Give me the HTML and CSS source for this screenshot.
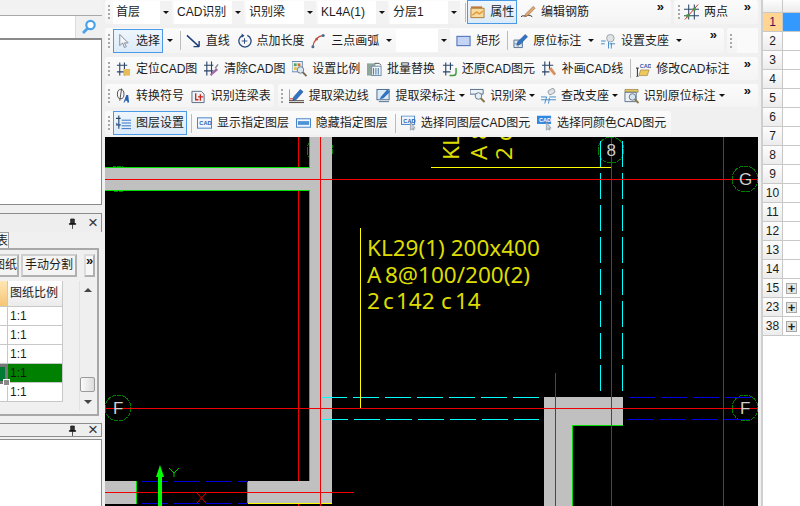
FILE: index.html
```html
<!DOCTYPE html>
<html lang="zh">
<head>
<meta charset="utf-8">
<title>CAD识别</title>
<link rel="stylesheet" href="styles.css">
</head>
<body>
<svg class="defs" aria-hidden="true">
  <symbol id="i-sel" viewBox="0 0 16 16"><path d="M4 1v12l3-3 2 5 2-1-2-4h4z" fill="#f4f6fa" stroke="#7d8794"/></symbol>
  <symbol id="i-line" viewBox="0 0 16 16"><path d="M1 2l13 12M14 14V8M14 14H8" fill="none" stroke="#1c3f78" stroke-width="1.5"/></symbol>
  <symbol id="i-addlen" viewBox="0 0 16 16"><path d="M6 2a6.5 6.5 0 1 0 5 0" fill="none" stroke="#274a7c" stroke-width="1.4"/><path d="M5 0l3 2.500-3 2z" fill="#274a7c"/><path d="M8 5v6M5 8h6" stroke="#274a7c"/></symbol>
  <symbol id="i-arc" viewBox="0 0 16 16"><path d="M2 14C3 8 7 3 13 2" fill="none" stroke="#c04a3a" stroke-width="1.3"/><circle cx="2" cy="14" r="1.600" fill="#4c6c8c"/><circle cx="6" cy="6" r="1.400" fill="#c05040"/><circle cx="13" cy="2" r="1.600" fill="#4c6c8c"/></symbol>
  <symbol id="i-rect" viewBox="0 0 16 16"><rect x="1" y="3" width="14" height="10" fill="#c4d4f4" stroke="#3d62b4"/></symbol>
  <symbol id="i-orig" viewBox="0 0 16 16"><path d="M1 7h9v8H1z" fill="#dfe7f2" stroke="#53708f"/><path d="M1 11h9M5.500 7v8" stroke="#7f98b4"/><path d="M5 9l8-8 2.500 2.500-8 8-3.500 1z" fill="#2f73c4" stroke="#234f86" stroke-width=".6"/></symbol>
  <symbol id="i-sup" viewBox="0 0 16 16"><circle cx="10" cy="5" r="4" fill="#dfe3e6" stroke="#98a2aa"/><path d="M0 8h5M0 11h4M9 11h6M8 9v7M11 10v6" stroke="#3f87c8" fill="none"/></symbol>
  <symbol id="i-loc" viewBox="0 0 16 16"><path d="M1 4h11M1 11h11M4 1v14M9 1v14" stroke="#2c4668" stroke-width="1.200"/><path d="M8 8h7v7H8z" fill="#e3bd5b"/></symbol>
  <symbol id="i-clr" viewBox="0 0 16 16"><path d="M0 4h10M0 10h10M3 0v15M8 0v15" stroke="#2c4668" stroke-width="1.200"/><path d="M6 14l7-7 2 2-7 6z" fill="#a06aa8"/><path d="M12 7l3-4" stroke="#80828c" stroke-width="1.500"/></symbol>
  <symbol id="i-scale" viewBox="0 0 16 16"><rect x="0" y="0" width="11" height="11" fill="#eef3f8" stroke="#5f87ae"/><rect x="2" y="2" width="3" height="3" fill="#55a25a"/><rect x="6" y="2" width="3" height="3" fill="#d86a3a"/><rect x="2" y="6" width="3" height="3" fill="#e7c24a"/><circle cx="9" cy="9" r="3.500" fill="#dbe7f1" stroke="#64788c"/><path d="M11.500 11.500l4 4" stroke="#7b6a55" stroke-width="2"/></symbol>
  <symbol id="i-batch" viewBox="0 0 16 16"><rect x="0" y="2" width="9" height="13" fill="#8fa79a"/><rect x="5" y="5" width="10" height="10" fill="#f2f5f8" stroke="#6a8aa8"/><path d="M7 7v7M9.500 7v7M12 7v7" stroke="#3c6ea0"/><path d="M8 2h5l2 2" fill="none" stroke="#555"/></symbol>
  <symbol id="i-res" viewBox="0 0 16 16"><path d="M1 4h11M1 11h8M4 1v14M9 1v8" stroke="#2c4668" stroke-width="1.200"/><path d="M15 7v5a3 3 0 0 1-3 3H8" fill="none" stroke="#3a9a3a" stroke-width="1.500"/></symbol>
  <symbol id="i-draw" viewBox="0 0 16 16"><path d="M0 4h12M0 11h8M3 0v15M8 0v9" stroke="#2c4668" stroke-width="1.200"/><path d="M7 8l3-2 5 7-2 2z" fill="#d88e60"/></symbol>
  <symbol id="i-mod" viewBox="0 0 16 16"><path d="M3 15l2-6h9l-2 6z" fill="#efc85c" stroke="#8a7030" stroke-width=".6"/><path d="M0 7h3M1.500 7v9M0 16h3" stroke="#222"/></symbol>
  <symbol id="i-conv" viewBox="0 0 16 16"><ellipse cx="5" cy="6" rx="3.500" ry="5" fill="none" stroke="#4a4a4a"/><path d="M6 0L4 13" stroke="#4a4a4a"/><path d="M8 15l3-8h2l1 8h-2v-2h-2l-1 2z" fill="#2660b0"/></symbol>
  <symbol id="i-tab" viewBox="0 0 16 16"><path d="M1 3h10l3 3v9H1z" fill="#eef2f6" stroke="#5a6a80"/><path d="M5 5v7h3M10 6v7M7.500 9H13" stroke="#c8281c" stroke-width="1.400" fill="none"/></symbol>
  <symbol id="i-edge" viewBox="0 0 16 16"><path d="M0 1v12h16M0 15h16" stroke="#4a3a30" fill="none"/><path d="M5 9l7-8 3 2.500-7 8-4 1.500z" fill="#2f73c4" stroke="#234f86" stroke-width=".6"/><path d="M1 11h4" stroke="#c8281c"/></symbol>
  <symbol id="i-lab" viewBox="0 0 16 16"><rect x="1" y="1" width="13" height="11" fill="#dceaf6" stroke="#4a6a8a"/><path d="M3 14h11" stroke="#4a6a8a"/><path d="M5 9l7-8 3 2.500-7 7-4 1z" fill="#2f73c4"/></symbol>
  <symbol id="i-rec" viewBox="0 0 16 16"><path d="M0 1h14v5H0z" fill="#eef2f6" stroke="#4c6888"/><circle cx="9" cy="8" r="3.500" fill="#e4eef6" stroke="#64788c"/><path d="M11.500 10.500l4 4" stroke="#8a7a45" stroke-width="2.200"/></symbol>
  <symbol id="i-chk" viewBox="0 0 16 16"><rect x="8" y="1" width="7" height="5" rx="2" transform="rotate(-30 11 4)" fill="#dfe3e6" stroke="#98a2aa"/><path d="M0 9h6M9 9h7M0 12h16M6 9l-2 7M9 10l-1 6" stroke="#3f87c8" fill="none"/></symbol>
  <symbol id="i-olab" viewBox="0 0 16 16"><path d="M1 1h14v3H1z" fill="#e8c65c" stroke="#7a6a30" stroke-width=".6"/><path d="M1 4h12v10H1z" fill="#eef2f4" stroke="#5a7088"/><circle cx="9" cy="9" r="3.500" fill="#d8e6f0" stroke="#64788c"/><path d="M11.500 11.500l4 4" stroke="#8a7a45" stroke-width="2"/></symbol>
  <symbol id="i-lay" viewBox="0 0 16 16"><path d="M3 0v14M0 3h5M0 10h5" stroke="#2c4668" stroke-width="1.200"/><path d="M6 5h10M6 8h10M6 11h10M6 14h10" stroke="#2d6fc0"/><path d="M0 8l4 3" stroke="#2d6fc0"/></symbol>
  <symbol id="i-show" viewBox="0 0 16 16"><rect x=".5" y="2.500" width="15" height="11" fill="#eef5fc" stroke="#3f7fc8"/></symbol>
  <symbol id="i-hide" viewBox="0 0 16 16"><rect x=".5" y="3.500" width="15" height="9" fill="#f2f7fc" stroke="#3f7fc8"/><rect x="2" y="6" width="12" height="4" fill="#4f92d8"/></symbol>
  <symbol id="i-same" viewBox="0 0 16 16"><rect x=".5" y=".5" width="14" height="9" fill="#eef5fc" stroke="#3f7fc8"/><path d="M10 7v9l2-2 1 2 1-.5-1-2h2z" fill="#c8d0d8" stroke="#7a8794" stroke-width=".6"/></symbol>
  <symbol id="i-clrs" viewBox="0 0 16 16"><rect x="0" y="0" width="15" height="9" fill="#3088e0"/><path d="M10 7v9l2-2 1 2 1-.5-1-2h2z" fill="#c8d0d8" stroke="#7a8794" stroke-width=".6"/></symbol>
  <symbol id="i-prop" viewBox="0 0 16 16"><path d="M1 2h12v2H1z" fill="#c07a3a"/><path d="M1 4h14v10H1z" fill="#f6dca0" stroke="#b07830"/><path d="M2 11l5-4 3 2 4-3v2l-4 3-3-2-4 3z" fill="#e89a38"/></symbol>
  <symbol id="i-edit" viewBox="0 0 16 16"><path d="M0 13c2-2 4 0 6-1s3-1 6 1" fill="none" stroke="#222"/><path d="M5 10l8-8 2 2-8 8-3 1z" fill="#e0a870" stroke="#8a5a30" stroke-width=".6"/></symbol>
  <symbol id="i-two" viewBox="0 0 16 16"><path d="M0 5h16M0 12h16M5 0v16M11 0v16" stroke="#2c4668" stroke-width="1.100"/><path d="M1 16L15 0" stroke="#c8281c"/><circle cx="4" cy="12" r="1.800" fill="#4a9a3a"/><circle cx="11" cy="5" r="1.800" fill="#4a9a3a"/></symbol>
  <symbol id="i-find" viewBox="0 0 16 16"><circle cx="9.500" cy="6" r="4.200" fill="#fff" stroke="#4aa3ea" stroke-width="2.200"/><path d="M6.500 9.500L2 14" stroke="#4aa3ea" stroke-width="2.800"/></symbol>
  <symbol id="i-pin" viewBox="0 0 10 12"><path d="M3 1h4v5H3zM1.500 6h7v1h-7zM5 7v5" fill="#333" stroke="#111" stroke-width=".8"/></symbol>
</svg>

<div class="app">
  <aside class="left">
    <div class="left-top"></div>
    <div class="search">
      <div class="search-input"></div>
      <svg class="ico-search"><use href="#i-find"/></svg>
    </div>
    <div class="left-body"></div>

    <div class="title"><svg class="pin"><use href="#i-pin"/></svg><span class="close">×</span></div>
    <div class="tabs"><span class="tab">表</span></div>
    <div class="pane">
      <div class="pane-tools">
        <span class="pbtn clip">图纸</span>
        <span class="pbtn">手动分割</span>
        <span class="more pmore">»</span>
      </div>
      <div class="pane-main">
        <div class="table">
          <div class="c head-sel"></div><div class="c head">图纸比例</div>
          <div class="c stub"></div><div class="c">1:1</div>
          <div class="c stub"></div><div class="c">1:1</div>
          <div class="c stub"></div><div class="c">1:1</div>
          <div class="c cur"></div><div class="c green">1:1</div>
          <div class="c stub"></div><div class="c">1:1</div>
        </div>
        <div class="scroll">
          <span class="sa up"></span>
          <span class="thumb"></span>
          <span class="sa down"></span>
        </div>
      </div>
    </div>

    <div class="title second"><svg class="pin"><use href="#i-pin"/></svg><span class="close">×</span></div>
    <div class="left-bottom"></div>
  </aside>

  <main class="main">
    <div class="bars">
      <div class="row r1">
        <div class="tb grow">
          <i class="grip"></i>
          <div class="combo w59"><span>首层</span><b class="cb"><i class="caret"></i></b></div>
          <div class="combo w70"><span>CAD识别</span><b class="cb"><i class="caret"></i></b></div>
          <div class="combo w70"><span>识别梁</span><b class="cb"><i class="caret"></i></b></div>
          <div class="combo w70"><span>KL4A(1)</span><b class="cb"><i class="caret"></i></b></div>
          <div class="combo w70"><span>分层1</span><b class="cb"><i class="caret"></i></b></div>
          <i class="sep"></i>
          <span class="tool on"><svg class="ico"><use href="#i-prop"/></svg>属性</span>
          <span class="tool"><svg class="ico"><use href="#i-edit"/></svg>编辑钢筋</span>
          <span class="more">»</span>
        </div>
        <div class="tb fix86">
          <i class="grip"></i>
          <span class="tool"><svg class="ico"><use href="#i-two"/></svg>两点</span>
          <span class="more">»</span>
        </div>
      </div>

      <div class="row r2">
        <div class="tb grow">
          <i class="grip"></i>
          <span class="tool on"><svg class="ico"><use href="#i-sel"/></svg>选择</span>
          <i class="caret split"></i>
          <i class="sep"></i>
          <span class="tool"><svg class="ico"><use href="#i-line"/></svg>直线</span>
          <span class="tool"><svg class="ico"><use href="#i-addlen"/></svg>点加长度</span>
          <span class="tool"><svg class="ico"><use href="#i-arc"/></svg>三点画弧<i class="caret far"></i></span>
          <div class="combo blank"><b class="cb"><i class="caret"></i></b></div>
          <span class="tool"><svg class="ico"><use href="#i-rect"/></svg>矩形</span>
          <i class="sep"></i>
          <span class="tool"><svg class="ico"><use href="#i-orig"/></svg>原位标注<i class="caret far"></i></span>
          <span class="tool"><svg class="ico"><use href="#i-sup"/></svg>设置支座<i class="caret far"></i></span>
          <span class="more">»</span>
        </div>
        <div class="tb fix31"><i class="grip"></i><div class="blank-bar"></div></div>
      </div>

      <div class="row r3">
        <div class="tb grow">
          <i class="grip"></i>
          <span class="tool"><svg class="ico"><use href="#i-loc"/></svg>定位CAD图</span>
          <span class="tool"><svg class="ico"><use href="#i-clr"/></svg>清除CAD图</span>
          <span class="tool"><svg class="ico"><use href="#i-scale"/></svg>设置比例</span>
          <span class="tool"><svg class="ico"><use href="#i-batch"/></svg>批量替换</span>
          <span class="tool"><svg class="ico"><use href="#i-res"/></svg>还原CAD图元</span>
          <span class="tool"><svg class="ico"><use href="#i-draw"/></svg>补画CAD线</span>
          <i class="sep"></i>
          <span class="tool"><svg class="ico" viewBox="0 0 16 16"><use href="#i-mod"/><text x="4" y="6.500" class="ico-text blue">CAD</text></svg>修改CAD标注</span>
          <span class="more">»</span>
        </div>
      </div>

      <div class="row r4">
        <div class="tb tight">
          <i class="grip"></i>
          <span class="tool"><svg class="ico"><use href="#i-conv"/></svg>转换符号</span>
          <span class="tool"><svg class="ico"><use href="#i-tab"/></svg>识别连梁表</span>
        </div>
        <div class="tb grow">
          <i class="grip"></i>
          <span class="tool"><svg class="ico"><use href="#i-edge"/></svg>提取梁边线</span>
          <span class="tool"><svg class="ico"><use href="#i-lab"/></svg>提取梁标注<i class="caret near"></i></span>
          <span class="tool"><svg class="ico"><use href="#i-rec"/></svg>识别梁<i class="caret near"></i></span>
          <span class="tool"><svg class="ico"><use href="#i-chk"/></svg>查改支座<i class="caret near"></i></span>
          <span class="tool"><svg class="ico"><use href="#i-olab"/></svg>识别原位标注<i class="caret near"></i></span>
          <span class="more">»</span>
        </div>
      </div>

      <div class="row r5">
        <div class="tb">
          <i class="grip"></i>
          <span class="tool on"><svg class="ico"><use href="#i-lay"/></svg>图层设置</span>
          <i class="sep"></i>
          <span class="tool"><svg class="ico" viewBox="0 0 16 16"><use href="#i-show"/><text x="2.500" y="10.500" class="ico-text blue">CAD</text></svg>显示指定图层</span>
          <span class="tool"><svg class="ico"><use href="#i-hide"/></svg>隐藏指定图层</span>
          <i class="sep"></i>
          <span class="tool"><svg class="ico" viewBox="0 0 16 16"><use href="#i-same"/><text x="2.500" y="7.500" class="ico-text blue">CAD</text></svg>选择同图层CAD图元</span>
          <span class="tool"><svg class="ico" viewBox="0 0 16 16"><use href="#i-clrs"/><text x="2" y="7" class="ico-text white">CAD</text></svg>选择同颜色CAD图元</span>
        </div>
      </div>
    </div>

    <svg class="canvas" viewBox="105 137 653 369" shape-rendering="crispEdges">
      <g class="axis-circle">
        <circle cx="118" cy="179" r="13"/>
        <circle cx="320" cy="150" r="13"/>
        <circle cx="611" cy="150" r="13"/>
        <circle cx="745" cy="179" r="13"/>
        <circle cx="118" cy="408" r="13"/>
        <circle cx="745" cy="408" r="13"/>
      </g>

      <g class="red">
        <path d="M298.500 137V506"/>
      </g>

      <g class="wall">
        <rect x="105" y="167" width="205" height="24"/>
        <rect x="310" y="137" width="22" height="367"/>
        <rect x="248" y="481" width="84" height="23"/>
        <rect x="105" y="481" width="31" height="23"/>
        <rect x="544" y="397" width="79" height="29"/>
        <rect x="544" y="397" width="28" height="109"/>
      </g>

      <g class="edge">
        <path d="M105 167.500H310M105 190.500H310M309.500 137V167M309.500 190V481M136.500 481V504M247.500 481V504M572.500 426V506M572 425.500H623"/>
      </g>
      <path class="yl" d="M248 503.500H332"/>

      <g class="dash-blue">
        <path d="M629 397.500H751M628 419.500H750M142 481.500H248M142 503.500H248"/>
      </g>
      <g class="dash-cyan">
        <path d="M321 397.500H539M322 419.500H539"/>
        <path d="M600.500 141V391M622.500 141V391"/>
      </g>
      <path class="cyan-solid" d="M320.500 398V413"/>

      <g class="red">
        <path d="M105 179.500H758"/>
        <path d="M320.500 137V506"/>
        <path d="M555.500 373V506"/>
        <path d="M611.500 137V506"/>
        <path d="M723.500 137V506"/>
        <path d="M105 408.500H758"/>
        <path d="M105 492.500H354"/>
      </g>

      <path class="yl" d="M431 167.500H611M360.500 228V408"/>

      <g class="axis-text">
        <text x="113" y="414">F</text>
        <text x="740" y="414">F</text>
        <text x="739" y="185">G</text>
        <text x="606.500" y="156">8</text>
      </g>

      <g class="note">
        <text x="367" y="256">KL29(1) 200x400</text>
        <text x="367" y="283">A</text>
        <text x="385" y="283">8@100/200(2)</text>
        <text x="367" y="309">2</text>
        <text x="383" y="309">c</text>
        <text x="396" y="309">142</text>
        <text x="441" y="309">c</text>
        <text x="455" y="309">14</text>
        <text transform="translate(459 160) rotate(-90)">KL</text>
        <text transform="translate(487 160) rotate(-90)">A 8</text>
        <text transform="translate(512 160) rotate(-90)">2 c</text>
      </g>

      <path class="arrow" d="M158 506V477H156L160 465L164 477H162V506Z" shape-rendering="auto"/>
      <path class="thin-green" d="M169 468L174 473L179 468M174 473V477"/>
      <path class="thin-red" d="M197 493L206 503M206 493L197 503"/>
    </svg>
  </main>

  <aside class="right">
    <div class="rail"></div>
    <div class="grid">
      <div class="rh top"></div><div class="rc top"></div>
      <div class="rh sel">1</div><div class="rc blue"></div>
      <div class="rh">2</div><div class="rc"></div>
      <div class="rh">3</div><div class="rc"></div>
      <div class="rh">4</div><div class="rc"></div>
      <div class="rh">5</div><div class="rc"></div>
      <div class="rh">6</div><div class="rc"></div>
      <div class="rh">7</div><div class="rc"></div>
      <div class="rh">8</div><div class="rc"></div>
      <div class="rh">9</div><div class="rc"></div>
      <div class="rh">10</div><div class="rc"></div>
      <div class="rh">11</div><div class="rc"></div>
      <div class="rh">12</div><div class="rc"></div>
      <div class="rh">13</div><div class="rc"></div>
      <div class="rh">14</div><div class="rc"></div>
      <div class="rh">15</div><div class="rc"><span class="plus">+</span></div>
      <div class="rh">23</div><div class="rc"><span class="plus">+</span></div>
      <div class="rh">38</div><div class="rc"><span class="plus">+</span></div>
    </div>
  </aside>
</div>
</body>
</html>
```
FILE: styles.css
```css
* { box-sizing: border-box; }
html, body { margin: 0; padding: 0; }
body {
  width: 800px;
  height: 506px;
  overflow: hidden;
  background: #f0f0f0;
  color: #1c1c1c;
  font: 12px/16px "Liberation Sans", "Noto Sans CJK SC", sans-serif;
}
.defs { position: absolute; width: 0; height: 0; }
.ico-text { font: bold 6px "Liberation Sans", sans-serif; }
.ico-text.blue { fill: #1f5fb0; }
.ico-text.white { fill: #fff; }

.app { display: flex; height: 506px; }

/* left docks */
.left { width: 102px; margin-right: 3px; display: flex; flex-direction: column; flex: none; }
.left-top { height: 16px; background: #f2f2f2; border-bottom: 1px solid #a8a8a8; }
.search { height: 24px; display: flex; align-items: center; background: #f0f0f0; border-bottom: 2px solid #8a8a8a; }
.search-input { width: 76px; height: 100%; background: #fff; border-right: 1px solid #dcdcdc; }
.ico-search { width: 16px; height: 16px; margin-left: 5px; }
.left-body { height: 165px; background: #fff; border-right: 1px solid #8a8a8a; border-bottom: 1px solid #8a8a8a; }
.title {
  height: 19px;
  margin-top: 8px;
  display: flex;
  align-items: center;
  justify-content: flex-end;
  gap: 11px;
  padding-right: 5px;
  background: #eeeeee;
  border-top: 1px solid #8c8c8c;
  border-right: 1px solid #8c8c8c;
}
.title.second { height: 14px; margin-top: 7px; border-bottom: 1px solid #8c8c8c; }
.pin { width: 9px; height: 11px; }
.close { width: 8px; font: 17px/12px "Liberation Sans", sans-serif; color: #333; text-align: center; }
.tabs { height: 16px; }
.tab {
  display: block;
  width: 9px;
  height: 16px;
  overflow: hidden;
  direction: rtl;
  border: 1px solid #a0a0a0;
  border-left: 0;
  border-bottom: 0;
  background: #f7f7f7;
  line-height: 16px;
}
.pane {
  width: 99px;
  height: 168px;
  padding: 4px 2px 6px 0;
  border: 2px solid #a8a8a8;
  border-left: 0;
  background: #f0f0f0;
}
.pane-tools { display: flex; height: 23px; gap: 2px; }
.pbtn {
  width: 56px;
  border: 2px solid #b0b0b0;
  border-left-color: #cfcfcf;
  border-top-color: #cfcfcf;
  background: #f4f4f4;
  line-height: 19px;
  text-align: center;
  white-space: nowrap;
}
.pbtn.clip { width: 19px; direction: rtl; overflow: hidden; border-left: 0; }
.more { margin-left: auto; align-self: flex-start; font: bold 13px/10px "Liberation Sans", sans-serif; color: #111; padding: 0 5px 0 0; margin-top: 2px; }
.pmore {
  height: 23px;
  width: 11px;
  margin-top: 0;
  padding: 0;
  text-align: center;
  border: 2px solid #b0b0b0;
  border-left-color: #dcdcdc;
  border-top-color: #dcdcdc;
  background: #f7f7f7;
  line-height: 10px;
}
.pane-main { display: flex; gap: 16px; margin-top: 4px; }
.table { display: grid; grid-template-columns: 8px 55px; grid-auto-rows: 19px; grid-template-rows: 26px; background: #fff; height: 121px; align-self: flex-start; }
.c { border-right: 1px solid #c8c8c8; border-bottom: 1px solid #c8c8c8; padding-left: 2px; line-height: 18px; font-size: 12px; position: relative; }
.head { background: linear-gradient(#ffffff, #ebebeb); line-height: 25px; }
.head-sel { background: linear-gradient(#ffe6b4, #f5c575); }
.stub { background: #fff; }
.green { background: #008000; color: #111; }
.cur { background: #007a35; border: 3px solid #777; border-left: 0; margin-bottom: -1px; z-index: 1; }
.cur::after { content: ""; position: absolute; right: -5px; bottom: -5px; width: 5px; height: 5px; background: #8a8a8a; border: 1px solid #fff; }
.scroll { width: 16px; height: 130px; display: flex; flex-direction: column; align-items: center; background: #efefef; border-left: 1px solid #e2e2e2; }
.sa { width: 0; height: 0; border-left: 4px solid transparent; border-right: 4px solid transparent; margin-left: 1px; }
.sa.up { border-bottom: 4px solid #444; margin-top: 7px; }
.sa.down { border-top: 4px solid #444; margin-bottom: 7px; }
.thumb { width: 15px; height: 15px; margin-top: auto; margin-bottom: 8px; background: linear-gradient(90deg, #fafafa, #dcdcdc); border: 1px solid #9a9a9a; border-radius: 2px; }
.left-bottom { flex: 1; margin-top: 2px; background: #fff; border-top: 1px solid #8c8c8c; border-right: 1px solid #8c8c8c; }

/* toolbars */
.main { width: 653px; flex: none; display: flex; flex-direction: column; }
.bars { height: 137px; display: flex; flex-direction: column; }
.row { display: flex; gap: 3px; }
.r1 { height: 24px; }
.r2 { height: 25px; margin-top: 4px; }
.r3 { height: 23px; margin-top: 4px; }
.r4 { height: 23px; margin-top: 4px; gap: 4px; }
.r5 { height: 24px; margin-top: 4px; }
.tb {
  display: flex;
  align-items: center;
  gap: .750px;
  padding: 0 2px 0 3px;
  white-space: nowrap;
  background: linear-gradient(#fbfbfb, #f4f4f4);
  border-radius: 3px;
}
.tight { padding-right: 0; }
.grow { flex: 1; min-width: 0; }
.fix86 { width: 84px; flex: none; padding-left: 4px; }
.fix86 .grip { margin-right: .250px; }
.fix31 { width: 31px; flex: none; padding-right: 0; align-items: stretch; }
.fix31 .grip { align-self: center; }
.blank-bar { flex: 1; background: #fafafa; margin: 1px 0 0 2px; }
.grip {
  display: block;
  width: 2px;
  height: 14px;
  margin-right: 2.250px;
  background: repeating-linear-gradient(#a8a8a8 0 2px, transparent 2px 4px);
  flex: none;
}
.sep { display: block; width: 1px; height: 19px; background: #bcbcbc; margin: 0 1.500px 0 3px; flex: none; }
.r1 .sep { margin-right: .500px; }
.tool { display: inline-flex; align-items: center; gap: 5px; padding: 0 2px; height: 23px; border: 1px solid transparent; flex: none; }
.tool.on { border: 1px solid #4a9ae8; background: linear-gradient(#eef6fd, #dcebf9); height: 24px; }
.ico { width: 15px; height: 16px; flex: none; }
.caret { display: block; width: 0; height: 0; border-left: 3px solid transparent; border-right: 3px solid transparent; border-top: 3px solid #111; flex: none; }
.caret.split { margin: 0 3px 0 3px; }
.caret.far { margin-left: 2px; }
.caret.near { margin-left: -2px; margin-right: -1px; }
.combo { display: flex; align-items: stretch; height: 23px; background: #fff; flex: none; margin-right: 1.250px; }
.combo span { flex: 1; padding-left: 3px; line-height: 23px; }
.cb { width: 12px; display: flex; align-items: center; justify-content: center; background: #f2f2f2; }
.w59 { width: 59px; }
.w70 { width: 70px; }
.blank { width: 54px; justify-content: flex-end; margin-right: 2.500px; }

/* drawing */
.canvas { display: block; width: 653px; height: 369px; background: #000; }
.wall rect { fill: #c0c0c0; }
.edge path { fill: none; stroke: #00e000; stroke-width: 1; }
.red path { fill: none; stroke: #f00000; stroke-width: 1; }
.yl { fill: none; stroke: #ffff00; stroke-width: 1; }
.dash-blue path { fill: none; stroke: #0000e0; stroke-dasharray: 26 6; }
.dash-cyan path { fill: none; stroke: #00ffff; stroke-dasharray: 26 6; }
.cyan-solid { fill: none; stroke: #00ffff; stroke-width: 1; }
.axis-circle circle { fill: none; stroke: #008000; stroke-dasharray: 4 1; }
.axis-text text { fill: #d0d0d0; font: 17px "Liberation Sans", sans-serif; }
.note text { fill: #dcdc00; font: 22.500px "Noto Sans", sans-serif; }
.arrow { fill: #00ff00; }
.thin-green { fill: none; stroke: #00c800; shape-rendering: auto; }
.thin-red { fill: none; stroke: #e00000; shape-rendering: auto; }

/* row grid */
.right { flex: 1; display: flex; min-width: 0; }
.rail { width: 5px; background: #f0f0f0; border-right: 2px solid #cfcfcf; }
.grid { flex: 1; display: grid; grid-template-columns: 20px 17px; grid-template-rows: 13px; grid-auto-rows: 19px; background: #fff; }
.rh {
  background: linear-gradient(#fdfdfd, #ececec);
  border-right: 1px solid #c8c8c8;
  border-bottom: 1px solid #c8c8c8;
  text-align: center;
  line-height: 18px;
  font-size: 12px;
}
.rh.sel { background: #ffd591; color: #4a1060; }
.rc { border-bottom: 1px solid #c8c8c8; display: flex; align-items: center; padding-left: 3px; }
.rc.top { background: linear-gradient(#fdfdfd, #ececec); }
.blue { background: #3399ff; }
.plus {
  width: 11px;
  height: 11px;
  background: #e4e4e4;
  border: 1px solid #a8a8a8;
  font: bold 13px/9px "Liberation Sans", sans-serif;
  text-align: center;
  color: #222;
}
```
